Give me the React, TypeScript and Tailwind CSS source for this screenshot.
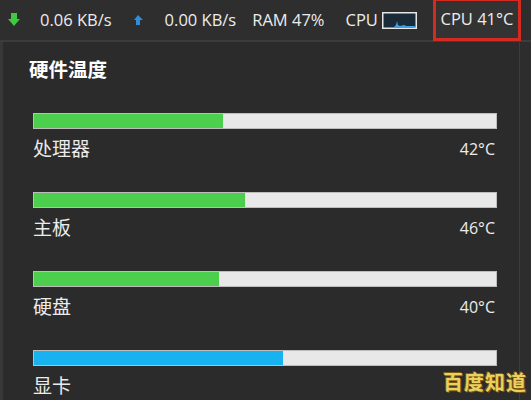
import React from "react";

const rows = [
  { label: "处理器", value: "42°C", pct: 41, color: "bg-[#4ccf4c]" },
  { label: "主板", value: "46°C", pct: 45.7, color: "bg-[#4ccf4c]" },
  { label: "硬盘", value: "40°C", pct: 40.1, color: "bg-[#4ccf4c]" },
  { label: "显卡", value: "", pct: 54, color: "bg-[#19b2f0]" },
];

export default function App() {
  return (
    <div
      className="w-[531px] h-[400px] bg-[#2b2b2b] overflow-hidden flex flex-col text-[#ececec] relative"
      style={{ fontFamily: '"Open Sans", "Noto Sans", "Noto Sans CJK SC", sans-serif' }}
    >
      {/* top bar */}
      <div className="h-[42px] shrink-0 bg-[#2e2e2e] border-b-2 border-[#3c3c3c] flex items-center text-[16.5px]">
        <svg width="14" height="16" viewBox="0 0 14 16" className="ml-[7px]">
          <rect x="4" y="1" width="6" height="7" fill="#3ec93e" />
          <path d="M1 7 L13 7 L7 14 Z" fill="#3ec93e" />
        </svg>
        <span className="ml-[19px]">0.06 KB/s</span>
        <svg width="10" height="14" viewBox="0 0 10 14" className="ml-[21px]">
          <path d="M5 2 L10 7 L1 7 Z" fill="#2a8fe0" />
          <rect x="3" y="6" width="4" height="6" fill="#2a8fe0" />
        </svg>
        <span className="ml-[22px]">0.00 KB/s</span>
        <span className="ml-[16px]">RAM 47%</span>
        <span className="ml-[21px]">CPU</span>
        <svg width="35" height="17" viewBox="0 0 35 17" className="ml-[4px]">
          <rect x="0.75" y="0.75" width="33.5" height="15.5" fill="#1b2a38" stroke="#e6e6e6" strokeWidth="1.5" />
          <path d="M2 15 L12 15 L14 13 L15 9 L16 13 L18 14 L22 13 L24 14 L33 14 L33 15.5 L2 15.5 Z" fill="#3da0e8" />
        </svg>
        <div className="ml-auto mr-[10px] h-[43px] w-[88px] border-[3px] border-[#d42a22] flex items-center justify-center -mt-[1px] bg-[#333]">
          <span>CPU 41°C</span>
        </div>
      </div>

      {/* body */}
      <div className="flex-1 flex">
        <div className="w-[3px] bg-[#383838]" />
        <div className="w-[517px] border-r border-[#3c3c3c] flex flex-col pl-[30px] pr-[22px]">
          <div className="mt-[14px] text-[19.5px] font-bold text-white -ml-[4px] leading-[27px]">硬件温度</div>
          <div className="mt-[30px] flex flex-col gap-[23px]">
            {rows.map((r) => (
              <div key={r.label} className="flex flex-col">
                <div className="h-[16px] w-[464px] bg-[#e8e8e8] border border-[#bdbdbd] flex">
                  <div className={`${r.color} h-full`} style={{ width: `${r.pct}%` }} />
                </div>
                <div className="flex justify-between items-center h-[40px]">
                  <span className="text-[19px]">{r.label}</span>
                  <span className="text-[16px] pr-[2px]">{r.value}</span>
                </div>
              </div>
            ))}
          </div>
        </div>
        <div className="flex-1 bg-[#2d2d2d]" />
      </div>
      <div
        className="absolute left-[443px] top-[368px] text-[20px] font-bold tracking-[1px] text-[#e9d060] whitespace-nowrap"
        style={{ textShadow: "1px 1px 0 #7a5a10, -1px -1px 0 #7a5a10" }}
      >
        百度知道
      </div>
    </div>
  );
}
